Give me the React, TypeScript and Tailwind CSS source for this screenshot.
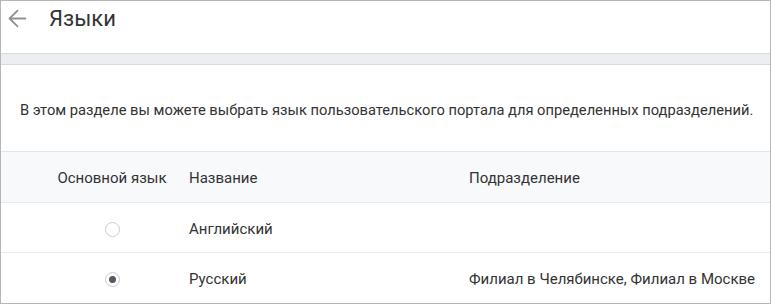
import { ArrowLeft } from 'lucide-react'

const rows = [
  { name: 'Английский', division: '', checked: false },
  { name: 'Русский', division: 'Филиал в Челябинске, Филиал в Москве', checked: true },
]

function Radio({ checked }: { checked: boolean }) {
  return (
    <span className="flex h-[15px] w-[15px] items-center justify-center rounded-full border border-[#c9cbce] bg-white">
      {checked && <span className="h-[7px] w-[7px] rounded-full bg-[#555a60]" />}
    </span>
  )
}

export default function App() {
  return (
    <div
      className="h-[304px] w-[771px] overflow-hidden border border-[#b6b6b6] bg-white text-[#333] text-[15px]"
      style={{ fontFamily: 'Roboto, "Liberation Sans", sans-serif' }}
    >
      {/* Header */}
      <div className="flex h-[52px] items-center">
        <ArrowLeft className="ml-[3px] -mt-[17px] h-[27px] w-[27px] shrink-0 text-[#8e9297]" strokeWidth={1.6} aria-hidden="true" />
        <h1 className="ml-[18px] -mt-[16px] text-[22px] leading-none text-[#333]">Языки</h1>
      </div>

      {/* Gray band */}
      <div className="h-[12px] border-y border-[#d9dbde] bg-[#eceef1]" />

      {/* Description */}
      <p className="pl-[19px] pt-[36px] pb-[31px] text-[14.7px] leading-[19px]">
        В этом разделе вы можете выбрать язык пользовательского портала для определенных подразделений.
      </p>

      {/* Table */}
      <div className="border-t border-[#e2e5e9]">
        <div className="grid h-[51px] grid-cols-[188px_280px_1fr] items-center border-b border-[#e8eaed] bg-[#f8f9fb] pt-[2px]">
          <div className="pl-[34px] text-center">Основной язык</div>
          <div>Название</div>
          <div>Подразделение</div>
        </div>
        {rows.map((row, i) => (
          <div
            key={row.name}
            className={`grid h-[50px] grid-cols-[188px_280px_1fr] items-center pt-[3px] ${i === 0 ? 'border-b border-[#e8eaed]' : ''}`}
          >
            <div className="flex justify-center pl-[34px]">
              <Radio checked={row.checked} />
            </div>
            <div>{row.name}</div>
            <div>{row.division}</div>
          </div>
        ))}
      </div>
    </div>
  )
}
